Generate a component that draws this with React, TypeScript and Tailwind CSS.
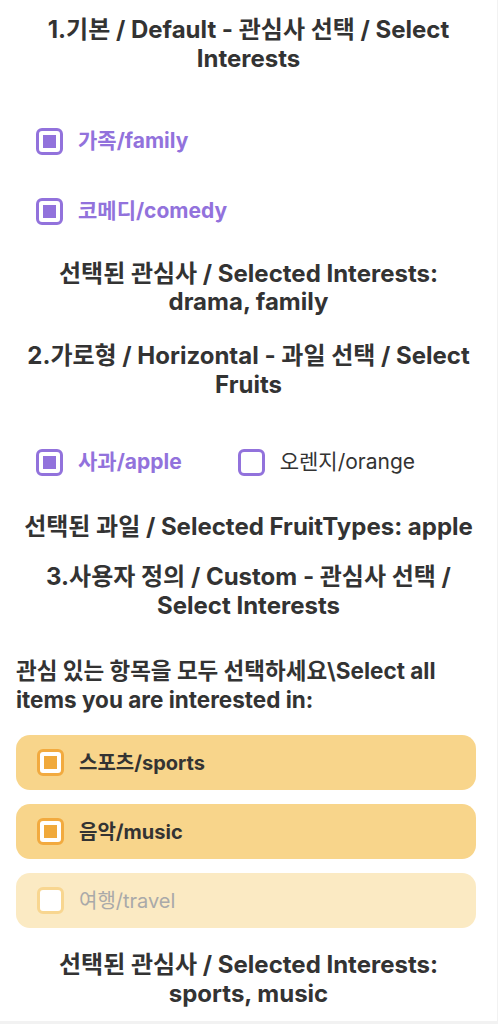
import { useState } from 'react';

const font = { fontFamily: 'Inter, "Noto Sans CJK KR", sans-serif' };

type Opt = { value: string; label: string };

const interests: Opt[] = [
  { value: 'family', label: '가족/family' },
  { value: 'comedy', label: '코메디/comedy' },
];

const fruits: Opt[] = [
  { value: 'apple', label: '사과/apple' },
  { value: 'orange', label: '오렌지/orange' },
];

const custom: Opt[] = [
  { value: 'sports', label: '스포츠/sports' },
  { value: 'music', label: '음악/music' },
  { value: 'travel', label: '여행/travel' },
];

function PurpleBox({ checked }: { checked: boolean }) {
  return (
    <span className="flex h-[27px] w-[27px] shrink-0 items-center justify-center rounded-[6px] border-[3px] border-[#9272dc]">
      {checked && <span className="h-[13px] w-[13px] bg-[#9272dc]" />}
    </span>
  );
}

function PurpleItem({ opt, checked, onToggle }: { opt: Opt; checked: boolean; onToggle: () => void }) {
  return (
    <button type="button" onClick={onToggle} className="flex h-[70px] items-center gap-[15px]">
      <PurpleBox checked={checked} />
      <span
        className={
          checked
            ? 'text-[21px] font-bold text-[#9272dc]'
            : 'text-[21px] font-normal text-[#333333]'
        }
      >
        {opt.label}
      </span>
    </button>
  );
}

export default function App() {
  // 첫 번째 그룹: 화면에는 family, comedy 체크 / 값은 drama, family
  const [picked, setPicked] = useState<string[]>(['family', 'comedy']);
  const [summary, setSummary] = useState<string[]>(['drama', 'family']);
  const [fruit, setFruit] = useState<string[]>(['apple']);
  const [hobby, setHobby] = useState<string[]>(['sports', 'music']);

  const toggle = (list: string[], set: (v: string[]) => void, v: string) =>
    set(list.includes(v) ? list.filter(x => x !== v) : [...list, v]);

  return (
    <div className="min-h-[1024px] bg-[#f2f2f2]" style={font}>
      <div className="h-[1021px] w-[497px] bg-white px-4 pt-[15px] text-[#333333]">
        {/* 1. 기본 */}
        <h2 className="text-center text-[24px] font-bold leading-[29px]">
          1.기본 / Default - 관심사 선택 / Select Interests
        </h2>
        <div className="mt-[33px] flex flex-col items-start pl-5">
          {interests.map(o => (
            <PurpleItem
              key={o.value}
              opt={o}
              checked={picked.includes(o.value)}
              onToggle={() => {
                toggle(picked, setPicked, o.value);
                toggle(summary, setSummary, o.value);
              }}
            />
          ))}
        </div>
        <p className="mt-[14px] text-center text-[24px] font-bold leading-[28px]">
          선택된 관심사 / Selected Interests: {summary.join(', ')}
        </p>

        {/* 2. 가로형 */}
        <h2 className="mt-[25px] text-center text-[24px] font-bold leading-[29px]">
          2.가로형 / Horizontal - 과일 선택 / Select Fruits
        </h2>
        <div className="mt-[28px] flex items-center gap-[56px] pl-5">
          {fruits.map(o => (
            <PurpleItem
              key={o.value}
              opt={o}
              checked={fruit.includes(o.value)}
              onToggle={() => toggle(fruit, setFruit, o.value)}
            />
          ))}
        </div>
        <p className="mt-[16px] text-center text-[24px] font-bold leading-[28px]">
          선택된 과일 / Selected FruitTypes: {fruit.join(', ')}
        </p>

        {/* 3. 사용자 정의 */}
        <h2 className="mt-[21px] text-center text-[24px] font-bold leading-[29px]">
          3.사용자 정의 / Custom - 관심사 선택 / Select Interests
        </h2>
        <p className="mt-[36px] text-[22.5px] font-bold leading-[29px]">
          관심 있는 항목을 모두 선택하세요\Select all items you are interested in:
        </p>
        <div className="mt-[21px] flex w-[460px] flex-col gap-[14px]">
          {custom.map(o => {
            const on = hobby.includes(o.value);
            return (
              <button
                key={o.value}
                type="button"
                onClick={() => toggle(hobby, setHobby, o.value)}
                className={
                  on
                    ? 'flex h-[55px] items-center gap-[15px] rounded-[14px] bg-[#f8d58b] pl-[21px]'
                    : 'flex h-[55px] items-center gap-[15px] rounded-[14px] bg-[#fbeac3] pl-[21px]'
                }
              >
                <span
                  className={
                    on
                      ? 'flex h-[27px] w-[27px] items-center justify-center rounded-[6px] border-[3px] border-[#f2aa3f] bg-white'
                      : 'flex h-[27px] w-[27px] items-center justify-center rounded-[6px] border-[3px] border-[#f8d690] bg-white'
                  }
                >
                  {on && <span className="h-[13px] w-[13px] bg-[#f0a93b]" />}
                </span>
                <span
                  className={
                    on
                      ? 'text-[20px] font-bold text-[#333333]'
                      : 'text-[20px] font-normal text-[#a9a9a9]'
                  }
                >
                  {o.label}
                </span>
              </button>
            );
          })}
        </div>
        <p className="mt-[22px] text-center text-[24px] font-bold leading-[29px]">
          선택된 관심사 / Selected Interests: {hobby.join(', ')}
        </p>
      </div>
    </div>
  );
}
